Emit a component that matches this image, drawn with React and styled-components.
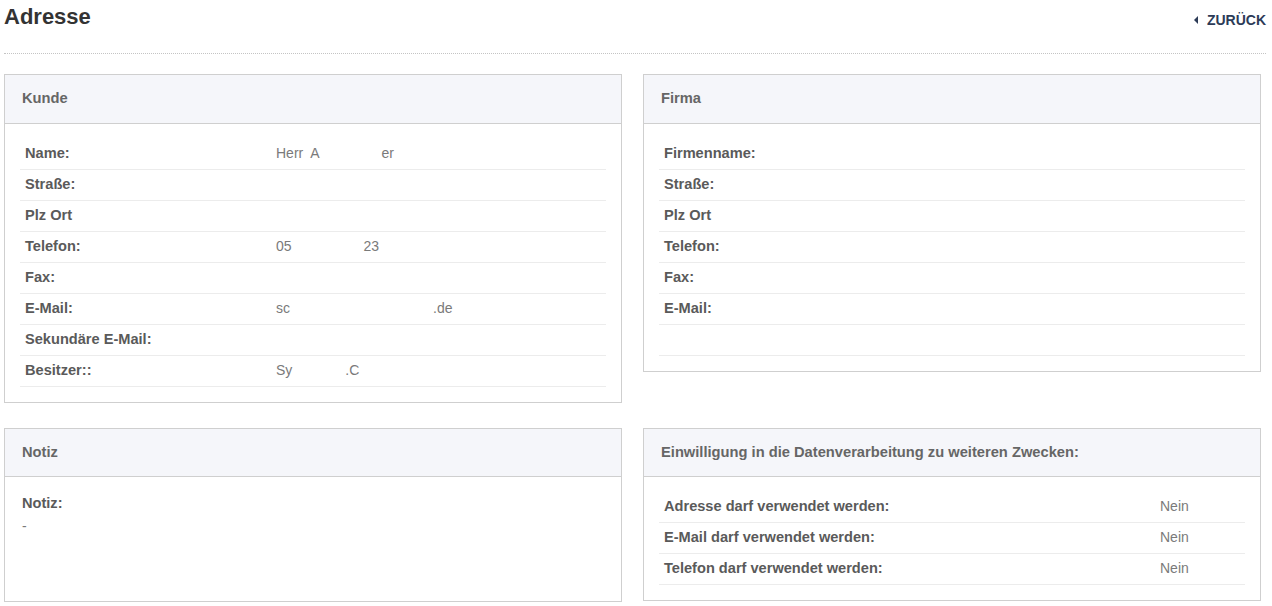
import styled, { createGlobalStyle } from "styled-components";

const GlobalStyle = createGlobalStyle`
  body {
    margin: 0;
    background: #fff;
    font-family: "Liberation Sans", Arial, sans-serif;
  }
`;

const kunde = [
  { label: "Name:", value: ["Herr  A", 62, "er"] },
  { label: "Straße:" },
  { label: "Plz Ort" },
  { label: "Telefon:", value: ["05", 72, "23"] },
  { label: "Fax:" },
  { label: "E-Mail:", value: ["sc", 143, ".de"] },
  { label: "Sekundäre E-Mail:" },
  { label: "Besitzer::", value: ["Sy", 53, ".C"] },
];

const firma = [
  { label: "Firmenname:" },
  { label: "Straße:" },
  { label: "Plz Ort" },
  { label: "Telefon:" },
  { label: "Fax:" },
  { label: "E-Mail:" },
  { label: "" },
];

const consent = [
  { label: "Adresse darf verwendet werden:", value: ["Nein"] },
  { label: "E-Mail darf verwendet werden:", value: ["Nein"] },
  { label: "Telefon darf verwendet werden:", value: ["Nein"] },
];

const Value = ({ parts }) => {
  if (!parts) return null;
  const [first, gap, last] = parts;
  return (
    <ValueText>
      {first}
      {gap ? <Blank $w={gap} /> : null}
      {last}
    </ValueText>
  );
};

const InfoTable = ({ rows, labelWidth }) => (
  <PanelBody>
    {rows.map((r, i) => (
      <Row key={i}>
        <Label $w={labelWidth}>{r.label}</Label>
        <Value parts={r.value} />
      </Row>
    ))}
  </PanelBody>
);

const App = () => {
  return (
    <Page>
      <GlobalStyle />
      <TopBar>
        <Title>Adresse</Title>
        <BackLink href="#">
          <Arrow />
          ZURÜCK
        </BackLink>
      </TopBar>
      <Grid>
        <Panel>
          <PanelHeader>Kunde</PanelHeader>
          <InfoTable rows={kunde} labelWidth={251} />
        </Panel>
        <Panel>
          <PanelHeader>Firma</PanelHeader>
          <InfoTable rows={firma} labelWidth={251} />
        </Panel>
        <Panel>
          <PanelHeader $h={48}>Notiz</PanelHeader>
          <NoteBody>
            <NoteLabel>Notiz:</NoteLabel>
            <NoteValue>-</NoteValue>
          </NoteBody>
        </Panel>
        <Panel>
          <PanelHeader $h={48}>Einwilligung in die Datenverarbeitung zu weiteren Zwecken:</PanelHeader>
          <InfoTable rows={consent} labelWidth={496} />
        </Panel>
      </Grid>
    </Page>
  );
};

export default App;

const Page = styled.div`
  padding: 0 6px 0 4px;
`;

const TopBar = styled.div`
  display: flex;
  justify-content: space-between;
  align-items: flex-start;
  height: 53px;
  border-bottom: 1px dotted #c4c4c4;
`;

const Title = styled.h1`
  margin: 0;
  padding-top: 4px;
  font-size: 22px;
  line-height: 26px;
  font-weight: bold;
  color: #333;
`;

const BackLink = styled.a`
  display: flex;
  align-items: center;
  gap: 9px;
  margin-top: 12px;
  font-size: 14px;
  font-weight: bold;
  color: #2c3b57;
  text-decoration: none;
  line-height: 16px;
`;

const Arrow = styled.span`
  width: 0;
  height: 0;
  border-top: 4px solid transparent;
  border-bottom: 4px solid transparent;
  border-right: 4px solid #2c3b57;
`;

const Grid = styled.div`
  display: grid;
  grid-template-columns: 618px 618px;
  column-gap: 21px;
  row-gap: 25px;
  align-items: start;
  margin-top: 20px;
`;

const Panel = styled.div`
  border: 1px solid #cfcfcf;
  background: #fff;
`;

const PanelHeader = styled.div`
  display: flex;
  align-items: center;
  height: ${(p) => p.$h || 49}px;
  padding: 0 17px 2px;
  box-sizing: border-box;
  background: #f5f6fa;
  border-bottom: 1px solid #cfcfcf;
  font-size: 14.7px;
  font-weight: bold;
  color: #666;
`;

const PanelBody = styled.div`
  padding: 15px;
`;

const Row = styled.div`
  display: flex;
  align-items: center;
  box-sizing: border-box;
  height: 31px;
  padding: 0 5px 2px;
  border-bottom: 1px solid #ececec;
`;

const Label = styled.div`
  flex: 0 0 ${(p) => p.$w}px;
  font-size: 14.6px;
  font-weight: bold;
  color: #5a5a5a;
`;

const ValueText = styled.div`
  font-size: 14px;
  color: #7a7a7a;
  white-space: pre;
`;

const Blank = styled.span`
  display: inline-block;
  width: ${(p) => p.$w}px;
`;

const NoteBody = styled.div`
  box-sizing: border-box;
  min-height: 124px;
  padding: 17px 17px;
`;

const NoteLabel = styled.div`
  font-size: 14.6px;
  line-height: 18px;
  font-weight: bold;
  color: #5a5a5a;
`;

const NoteValue = styled.div`
  margin-top: 5px;
  font-size: 14px;
  line-height: 18px;
  color: #7a7a7a;
`;
